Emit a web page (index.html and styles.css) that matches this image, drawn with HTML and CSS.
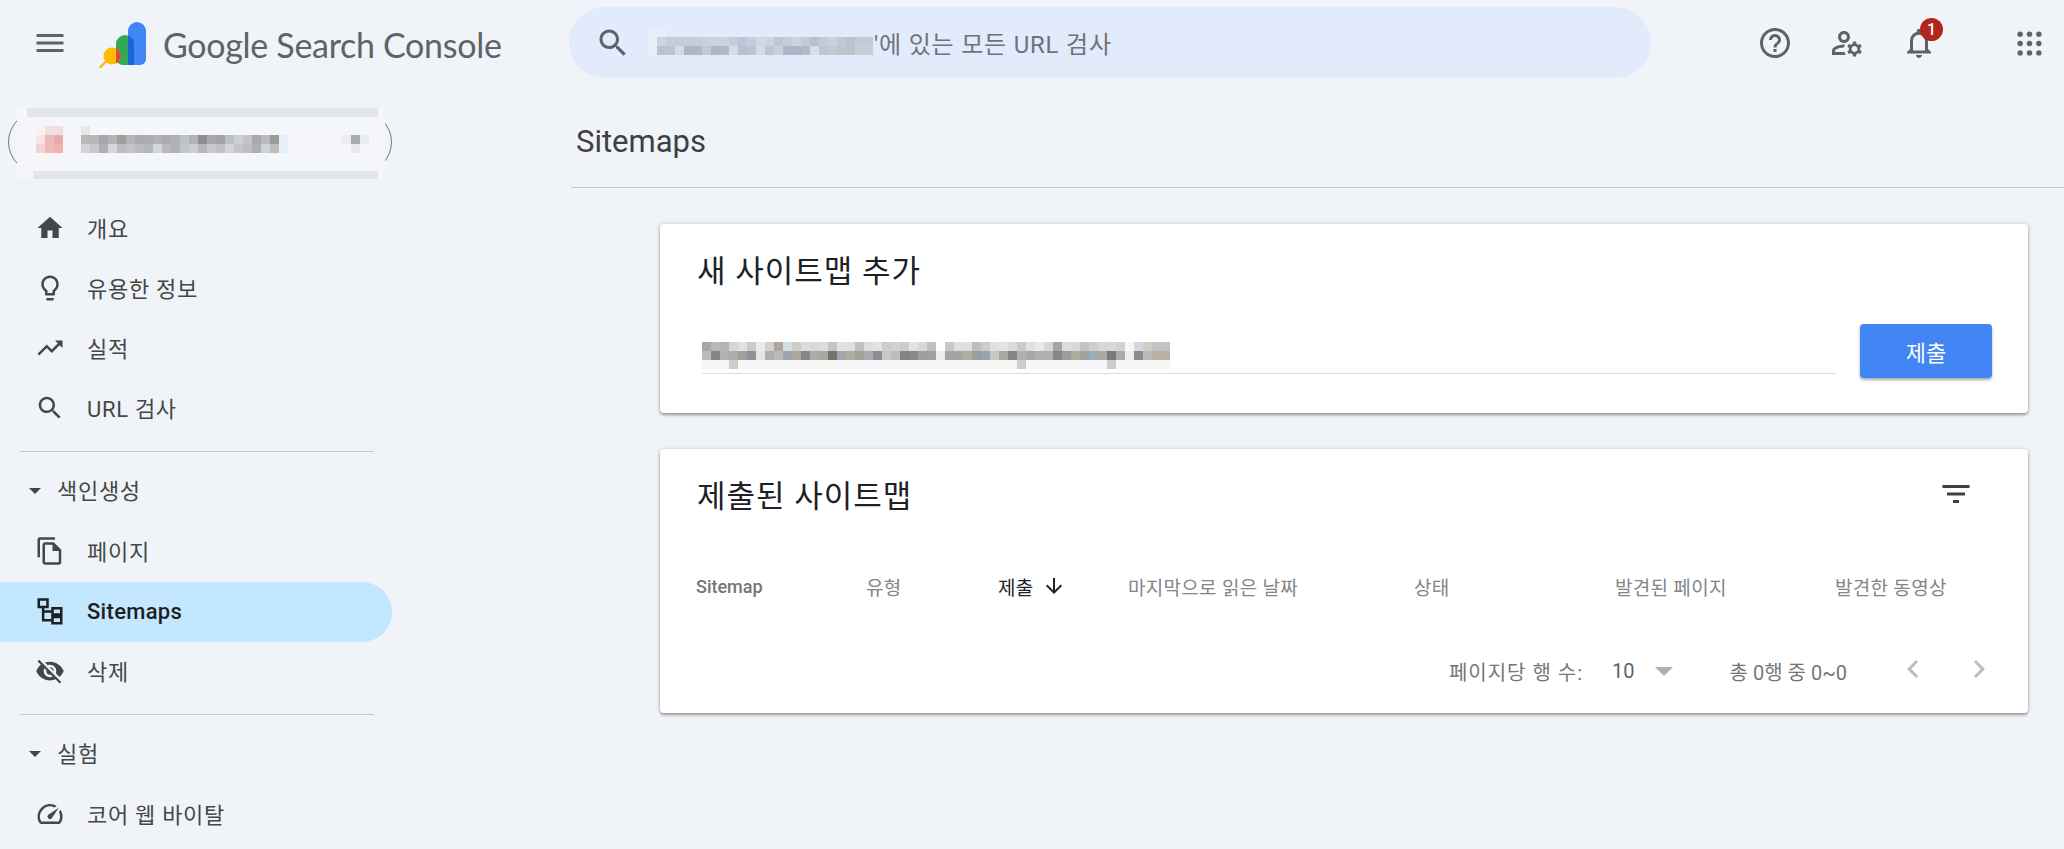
FILE: index.html
```html
<!DOCTYPE html>
<html lang="ko">
<head>
    <meta charset="UTF-8">
    <title>Sitemaps - Google Search Console</title>
    <link rel="stylesheet" href="styles.css">
</head>
<body>
    <!-- Top bar -->
    <header class="topbar">
        <svg class="icon menu-icon" viewBox="0 0 24 24"><path d="M3 18h18v-2H3v2zm0-5h18v-2H3v2zm0-7v2h18V6H3z"/></svg>
        <svg class="logo" viewBox="0 0 47 46">
            <path fill="#fbbc04" d="M.4 44.400l6.600-6.600 1.800 1.800-6.600 6.400a1.200 1.200 0 0 1-1.800-1.600z"/>
            <path fill="#34a853" d="M17 22a9 9 0 0 1 18 0v21H24a7 7 0 0 1-7-7z"/>
            <path fill="#4285f4" d="M29 9a9 9 0 0 1 18 0v28a6 6 0 0 1-6 6H29z"/>
            <path fill="#1967d2" d="M29 13.500A9 9 0 0 1 35 22v21h-6z"/>
            <circle cx="13" cy="34" r="8.500" fill="#fbbc04"/>
            <path fill="#ea4335" d="M17 26.500a8.500 8.500 0 0 1 0 15z"/>
        </svg>
        <span class="product-name">Google Search Console</span>
        <div class="searchbar">
            <svg class="icon search-icon" viewBox="0 0 24 24"><path d="M15.500 14h-.79l-.28-.27C15.410 12.590 16 11.110 16 9.500 16 5.910 13.090 3 9.500 3S3 5.910 3 9.500 5.910 16 9.500 16c1.610 0 3.090-.59 4.230-1.570l.27.28v.79l5 4.990L20.490 19l-4.990-5zm-6 0C7.010 14 5 11.990 5 9.500S7.010 5 9.500 5 14 7.010 14 9.500 11.990 14 9.500 14z"/></svg>
            <div class="mosaic search-mosaic">
                <i class="m-search-1"></i>
                <i class="m-search-2"></i>
                <i class="m-search-3"></i>
            </div>
            <span class="search-text">'에 있는 모든 URL 검사</span>
        </div>
        <div class="top-actions">
            <svg class="icon top-icon help-icon" viewBox="0 0 24 24"><path d="M11 18h2v-2h-2v2zm1-16C6.480 2 2 6.480 2 12s4.480 10 10 10 10-4.480 10-10S17.520 2 12 2zm0 18c-4.410 0-8-3.590-8-8s3.590-8 8-8 8 3.590 8 8-3.590 8-8 8zm0-14c-2.210 0-4 1.790-4 4h2c0-1.100.9-2 2-2s2 .9 2 2c0 2-3 1.750-3 5h2c0-2.250 3-2.500 3-5 0-2.210-1.790-4-4-4z"/></svg>
            <svg class="icon top-icon" viewBox="0 0 24 24"><path d="M4 18v-.65c0-.34.16-.66.41-.81C6.100 15.530 8.030 15 10 15c.03 0 .05 0 .08.01.1-.7.3-1.370.59-1.980-.22-.02-.44-.03-.67-.03-2.420 0-4.680.67-6.610 1.820-.88.52-1.390 1.500-1.390 2.530V20h9.260c-.42-.6-.75-1.280-.97-2H4zM10 12c2.210 0 4-1.790 4-4s-1.790-4-4-4-4 1.790-4 4 1.790 4 4 4zm0-6c1.100 0 2 .9 2 2s-.9 2-2 2-2-.9-2-2 .9-2 2-2zM20.750 16c0-.22-.03-.42-.06-.63l1.140-1.010-1-1.730-1.450.49c-.32-.27-.68-.48-1.080-.63L18 11h-2l-.3 1.490c-.4.15-.76.36-1.080.63l-1.450-.49-1 1.730 1.140 1.010c-.03.21-.06.41-.06.63s.03.42.06.63l-1.140 1.010 1 1.730 1.450-.49c.32.27.68.48 1.080.63L16 21h2l.3-1.490c.4-.15.76-.36 1.080-.63l1.450.49 1-1.730-1.140-1.010c.03-.21.06-.41.06-.63zM17 18c-1.100 0-2-.9-2-2s.9-2 2-2 2 .9 2 2-.9 2-2 2z"/></svg>
            <div class="bell">
                <svg class="icon top-icon" viewBox="0 0 24 24"><path d="M12 22c1.100 0 2-.9 2-2h-4c0 1.100.9 2 2 2zm6-6v-5c0-3.070-1.630-5.640-4.500-6.320V4c0-.83-.67-1.500-1.500-1.500s-1.500.67-1.500 1.500v.68C7.640 5.360 6 7.920 6 11v5l-2 2v1h16v-1l-2-2zm-2 1H8v-6c0-2.480 1.510-4.500 4-4.500s4 2.020 4 4.500v6z"/></svg>
                <span class="badge">1</span>
            </div>
            <svg class="apps-icon" viewBox="0 0 24 24">
                <circle cx="3" cy="3" r="2.600"/><circle cx="12" cy="3" r="2.600"/><circle cx="21" cy="3" r="2.600"/>
                <circle cx="3" cy="12" r="2.600"/><circle cx="12" cy="12" r="2.600"/><circle cx="21" cy="12" r="2.600"/>
                <circle cx="3" cy="21" r="2.600"/><circle cx="12" cy="21" r="2.600"/><circle cx="21" cy="21" r="2.600"/>
            </svg>
        </div>
    </header>

    <div class="layout">
        <!-- Sidebar -->
        <aside class="sidebar">
            <div class="property">
                <div class="property-blur"></div>
                <div class="mosaic favicon-mosaic">
                    <i class="m-fav-1"></i>
                    <i class="m-fav-2"></i>
                    <i class="m-fav-3"></i>
                    <i class="m-fav-4"></i>
                </div>
                <div class="mosaic property-mosaic">
                    <i class="m-prop-0"></i>
                    <i class="m-prop-1"></i>
                    <i class="m-prop-2"></i>
                </div>
                <div class="mosaic caret-mosaic">
                    <i class="m-caret-1"></i>
                    <i class="m-caret-2"></i>
                </div>
            </div>

            <nav class="nav">
                <a class="nav-item">
                    <svg class="icon" viewBox="0 0 24 24"><path d="M10 20v-6h4v6h5v-8h3L12 3 2 12h3v8z"/></svg>
                    <span>개요</span>
                </a>
                <a class="nav-item">
                    <svg class="icon" viewBox="0 0 24 24"><path d="M9 21c0 .55.45 1 1 1h4c.55 0 1-.45 1-1v-1H9v1zm3-19C8.140 2 5 5.140 5 9c0 2.380 1.190 4.470 3 5.740V17c0 .55.45 1 1 1h6c.55 0 1-.45 1-1v-2.260c1.810-1.270 3-3.360 3-5.740 0-3.860-3.140-7-7-7zm2.850 11.100l-.85.6V16h-4v-2.300l-.85-.6C7.800 12.160 7 10.630 7 9c0-2.760 2.240-5 5-5s5 2.240 5 5c0 1.630-.8 3.160-2.150 4.100z"/></svg>
                    <span>유용한 정보</span>
                </a>
                <a class="nav-item">
                    <svg class="icon" viewBox="0 0 24 24"><path d="M16 6l2.290 2.290-4.880 4.880-4-4L2 16.590 3.410 18l6-6 4 4 6.300-6.290L22 12V6z"/></svg>
                    <span>실적</span>
                </a>
                <a class="nav-item">
                    <svg class="icon" viewBox="0 0 24 24"><path d="M15.500 14h-.79l-.28-.27C15.410 12.590 16 11.110 16 9.500 16 5.910 13.090 3 9.500 3S3 5.910 3 9.500 5.910 16 9.500 16c1.610 0 3.090-.59 4.230-1.570l.27.28v.79l5 4.990L20.490 19l-4.990-5zm-6 0C7.010 14 5 11.990 5 9.500S7.010 5 9.500 5 14 7.010 14 9.500 11.990 14 9.500 14z"/></svg>
                    <span>URL 검사</span>
                </a>

                <div class="nav-divider"></div>
                <div class="nav-group"><span class="caret"></span><span>색인생성</span></div>

                <a class="nav-item">
                    <svg class="icon" viewBox="0 0 24 24"><path d="M16 1H4c-1.100 0-2 .9-2 2v14h2V3h12V1zm-1 4H8c-1.100 0-1.990.9-1.990 2L6 21c0 1.100.89 2 1.990 2H19c1.100 0 2-.9 2-2V11l-6-6zM8 21V7h6v5h5v9H8z"/></svg>
                    <span>페이지</span>
                </a>
                <a class="nav-item active">
                    <svg class="icon" viewBox="0 0 24 24"><path class="outline" d="M3 2h7v6H3zM14 9h7v5h-7zM14 16h7v5h-7zM6.500 8v10.500H14M6.500 11.500H14"/></svg>
                    <span>Sitemaps</span>
                </a>
                <a class="nav-item">
                    <svg class="icon" viewBox="0 0 24 24"><path d="M12 7c2.760 0 5 2.240 5 5 0 .65-.13 1.260-.36 1.830l2.920 2.920c1.510-1.260 2.700-2.890 3.430-4.750-1.730-4.390-6-7.500-11-7.500-1.400 0-2.740.25-3.980.7l2.160 2.160C10.740 7.130 11.350 7 12 7zM2 4.270l2.280 2.280.46.46C3.080 8.300 1.780 10.020 1 12c1.730 4.390 6 7.500 11 7.500 1.550 0 3.030-.3 4.380-.84l.42.42L19.730 22 21 20.730 3.270 3 2 4.270zM7.530 9.800l1.550 1.550c-.05.21-.08.43-.08.65 0 1.660 1.340 3 3 3 .22 0 .44-.03.65-.08l1.550 1.550c-.67.33-1.410.53-2.200.53-2.760 0-5-2.240-5-5 0-.79.2-1.530.53-2.200zm4.310-.78l3.150 3.150.02-.16c0-1.660-1.340-3-3-3l-.17.01z"/></svg>
                    <span>삭제</span>
                </a>

                <div class="nav-divider"></div>
                <div class="nav-group"><span class="caret"></span><span>실험</span></div>

                <a class="nav-item">
                    <svg class="icon" viewBox="0 0 24 24"><path d="M20.380 8.570l-1.230 1.850a8 8 0 0 1-.22 7.580H5.070A8 8 0 0 1 15.580 6.850l1.850-1.230A10 10 0 0 0 3.350 19a2 2 0 0 0 1.720 1h13.850a2 2 0 0 0 1.740-1 10 10 0 0 0-.27-10.440z"/><path d="M10.590 15.410a2 2 0 0 0 2.830 0l5.660-8.490-8.490 5.660a2 2 0 0 0 0 2.830z"/></svg>
                    <span>코어 웹 바이탈</span>
                </a>
            </nav>
        </aside>

        <!-- Content -->
        <main class="content">
            <h1 class="page-title">Sitemaps</h1>

            <div class="cards">
                <section class="card add-card">
                    <h2 class="card-title">새 사이트맵 추가</h2>
                    <div class="add-row">
                        <div class="sitemap-input">
                            <div class="mosaic input-mosaic">
                                <i class="m-input-1"></i>
                                <i class="m-input-2"></i>
                                <i class="m-input-3"></i>
                            </div>
                        </div>
                        <button class="submit-btn">제출</button>
                    </div>
                </section>

                <section class="card list-card">
                    <div class="list-head">
                        <h2 class="card-title">제출된 사이트맵</h2>
                        <svg class="icon filter-icon" viewBox="0 0 24 24"><path d="M10 18h4v-2h-4v2zM3 6v2h18V6H3zm3 7h12v-2H6v2z"/></svg>
                    </div>
                    <div class="table-head">
                        <span class="col col-sitemap">Sitemap</span>
                        <span class="col col-type">유형</span>
                        <span class="col col-submit">제출
                            <svg class="sort-icon" viewBox="0 0 24 24"><path d="M20 12l-1.410-1.410L13 16.170V4h-2v12.170l-5.580-5.590L4 12l8 8 8-8z"/></svg>
                        </span>
                        <span class="col col-read">마지막으로 읽은 날짜</span>
                        <span class="col col-status">상태</span>
                        <span class="col col-pages">발견된 페이지</span>
                        <span class="col col-videos">발견한 동영상</span>
                    </div>
                    <div class="pager">
                        <span class="pager-label">페이지당 행 수:</span>
                        <span class="pager-size">10</span>
                        <span class="pager-arrow"></span>
                        <span class="pager-count">총 0행 중 0~0</span>
                        <svg class="pager-nav" viewBox="0 0 24 24"><path d="M15.410 7.410L14 6l-6 6 6 6 1.410-1.410L10.830 12z"/></svg>
                        <svg class="pager-nav" viewBox="0 0 24 24"><path d="M10 6L8.590 7.410 13.170 12l-4.580 4.590L10 18l6-6z"/></svg>
                    </div>
                </section>
            </div>
        </main>
    </div>
</body>
</html>
```

FILE: styles.css
```css
* {
    box-sizing: border-box;
}

html, body {
    height: 100%;
}

body {
    margin: 0;
    overflow: hidden;
    background-color: #f0f4f9;
    color: #444746;
    font-family: Roboto, "Noto Sans CJK KR", sans-serif;
    font-size: 22px;
}

.icon {
    display: block;
    flex: none;
    width: 30px;
    height: 30px;
    fill: #444746;
}

/* Top bar */
.topbar {
    display: flex;
    align-items: center;
    height: 86px;
    padding-left: 32px;
}

.menu-icon {
    width: 36px;
    height: 36px;
    fill: #5f6368;
}

.logo {
    flex: none;
    width: 47px;
    height: 46px;
    margin-left: 31px;
    margin-top: 4px;
}

.product-name {
    flex: none;
    width: 406px;
    margin-left: 17px;
    margin-top: 2px;
    font-family: Lato, sans-serif;
    font-size: 34px;
    letter-spacing: -.3px;
    color: #5f6368;
}

.searchbar {
    display: flex;
    align-items: center;
    flex: none;
    width: 1082px;
    height: 71px;
    margin-top: -1px;
    padding-left: 26px;
    border-radius: 36px;
    background-color: #e1ebfc;
}

.search-icon {
    width: 36px;
    height: 36px;
    fill: #5f6368;
}

.search-mosaic {
    margin-left: 17px;
    margin-top: -3px;
}

.search-text {
    margin-left: 1px;
    color: #6f7276;
    font-size: 24px;
    letter-spacing: .8px;
    white-space: nowrap;
}

.top-actions {
    display: flex;
    align-items: center;
    margin-left: 106px;
}

.top-icon {
    width: 36px;
    height: 36px;
    fill: #5f6368;
}

.help-icon {
    margin-right: 36px;
}

.bell {
    position: relative;
    margin-left: 36px;
}

.badge {
    position: absolute;
    top: -7px;
    right: -6px;
    width: 23px;
    height: 23px;
    border-radius: 50%;
    background-color: #b3261e;
    color: #fff;
    font-size: 16px;
    font-weight: 500;
    line-height: 23px;
    text-align: center;
}

.apps-icon {
    flex: none;
    width: 25px;
    height: 25px;
    margin-left: 80px;
    fill: #5f6368;
}

/* Pixelated parts of the picture, cells are 9px */
.mosaic {
    flex: none;
}

.mosaic i {
    display: block;
    height: 9px;
}

.m-search-1 {
    width: 18px;
    background: #e9eff9;
}

.m-search-2 {
    width: 225px;
    background: linear-gradient(90deg, #e9eff9 0 9px, #cbd3e1 0 18px, #c5cddb 0 27px, #c3cbda 0 36px, #c6cedc 0 45px, #c5cddc 0 54px, #c9d1df 0 63px, #cad2e0 0 72px, #cbd3e1 0 81px, #c4cddb 0 90px, #bdc6d5 0 99px, #c5cddc 0 108px, #d0d8e5 0 117px, #cdd4e2 0 126px, #bfc7d6 0 135px, #c4ccda 0 144px, #cbd3e0 0 153px, #c2cad8 0 162px, #b9c1cf 0 171px, #c3cbd9 0 180px, #c9d1de 0 189px, #c1c9d6 0 198px, #bac2ce 0 207px, #c3cad6 0 225px);
}

.m-search-3 {
    width: 225px;
    background: linear-gradient(90deg, #e9eff9 0 9px, #bbc2cf 0 18px, #bec5d2 0 27px, #d3dbe8 0 36px, #aeb5c3 0 45px, #afb6c4 0 54px, #c1c8d6 0 63px, #aeb5c3 0 72px, #b1b8c6 0 81px, #d4dce9 0 90px, #b9c0ce 0 99px, #bcc3d1 0 108px, #d4dce9 0 117px, #bfc6d3 0 126px, #c9d0de 0 135px, #adb4c3 0 144px, #aeb5c2 0 153px, #b4bac6 0 162px, #d8dfeb 0 171px, #c0c7d3 0 180px, #c3cad5 0 189px, #bfc5cf 0 198px, #bdc2cb 0 207px, #c8ced8 0 225px);
}

/* Sidebar */
.layout {
    display: grid;
    grid-template-columns: 392px 1fr;
    height: calc(100vh - 86px);
}

.property {
    position: relative;
    width: 384px;
    height: 62px;
    margin: 25px 0 0 8px;
    border: 1px solid #747775;
    border-radius: 31px;
}

/* The blur lies over the pill and hides its straight edges */
.property-blur {
    position: absolute;
    top: -4px;
    left: 8px;
    width: 368px;
    height: 71px;
    background:
        linear-gradient(#e2e5ea, #e2e5ea) 10px 0 / 351px 9px no-repeat,
        linear-gradient(#e2e5ea, #e2e5ea) 16px 100% / 345px 8px no-repeat,
        #f4f6fa;
}

.favicon-mosaic {
    position: absolute;
    top: 14px;
    left: 27px;
}

.favicon-mosaic i {
    width: 27px;
}

.m-fav-1 {
    background: linear-gradient(90deg, #fbf1ee 0 9px, #f3dde1 0 27px);
}

.m-fav-2 {
    background: linear-gradient(90deg, #f8e4e2 0 9px, #ecb9bd 0 18px, #e8a9b1 0 27px);
}

.m-fav-3 {
    background: linear-gradient(90deg, #f0d3d9 0 9px, #efb9b5 0 18px, #f0b3b0 0 27px);
}

.m-fav-4 {
    background: #f9f6f6;
}

.property-mosaic {
    position: absolute;
    top: 14px;
    left: 72px;
}

.m-prop-0 {
    width: 9px;
    background: #e4e6ea;
}

.m-prop-1 {
    width: 207px;
    background: linear-gradient(90deg, #b9b8b8 0 18px, #a6a8aa 0 27px, #b1b5bb 0 36px, #9e9f99 0 45px, #b2b5bd 0 54px, #a9abb0 0 63px, #a9adb3 0 72px, #b4b4b4 0 81px, #acacae 0 90px, #b0b3b5 0 99px, #bcc3cb 0 108px, #b6b2b2 0 117px, #8b8d92 0 126px, #a8a9ab 0 135px, #a0a2a9 0 144px, #bcbfc6 0 153px, #ced0d2 0 162px, #c4c5c7 0 171px, #a9aaae 0 180px, #b8bbc0 0 189px, #9b9b97 0 198px, #e6eff8 0 207px);
}

.m-prop-2 {
    width: 207px;
    background: linear-gradient(90deg, #d4d4d6 0 9px, #c8c9ca 0 18px, #adafb1 0 27px, #d2d6dd 0 36px, #bcbdbb 0 45px, #c2c4c8 0 54px, #b9bcc2 0 63px, #b1b8c0 0 72px, #d4d6d9 0 81px, #b8b9bb 0 90px, #b0b2b3 0 99px, #bfc6ce 0 108px, #cfcfcf 0 117px, #b5b8c0 0 126px, #c8c9cc 0 135px, #bec1c9 0 144px, #d2d4d9 0 153px, #c4c5c7 0 162px, #bdbebf 0 171px, #adb0b3 0 180px, #cfd3d9 0 189px, #bfbdb9 0 198px, #e6eff8 0 207px);
}

.caret-mosaic {
    position: absolute;
    top: 23px;
    left: 333px;
}

.caret-mosaic i {
    width: 27px;
}

.m-caret-1 {
    background: linear-gradient(90deg, #ecedf0 0 9px, #a9abae 0 18px, #e8edf5 0 27px);
}

.m-caret-2 {
    background: linear-gradient(90deg, #f4f6fa 0 9px, #e6e8ec 0 18px, #f4f6fa 0 27px);
}

.nav {
    margin-top: 25px;
    letter-spacing: .7px;
}

.nav-item {
    display: flex;
    align-items: center;
    gap: 22px;
    height: 60px;
    padding-left: 35px;
    border-radius: 0 30px 30px 0;
    white-space: nowrap;
}

.nav-item span,
.nav-group span:last-child {
    padding-bottom: 2px;
}

.nav-item.active {
    margin-top: 1px;
    margin-bottom: -1px;
    background-color: #c2e7ff;
    color: #1f1f1f;
    font-weight: 500;
    letter-spacing: .3px;
}

.outline {
    fill: none;
    stroke: #1f1f1f;
    stroke-width: 2;
}

.nav-divider {
    width: 354px;
    height: 1px;
    margin: 13px 0 0 20px;
    background-color: #c4c7c5;
}

.nav-group {
    display: flex;
    align-items: center;
    gap: 16px;
    height: 68px;
    margin-bottom: 1px;
    padding: 7px 0 0 29px;
}

.caret {
    flex: none;
    width: 0;
    height: 0;
    margin-top: 3px;
    border-left: 6.500px solid transparent;
    border-right: 6.500px solid transparent;
    border-top: 6.500px solid #444746;
}

/* Content */
.content {
    margin-left: 179px;
}

.page-title {
    height: 102px;
    margin: 0;
    padding: 0 0 0 5px;
    border-bottom: 1px solid #c4c7c5;
    font-size: 31px;
    font-weight: 400;
    line-height: 112px;
    color: #3c4043;
}

.cards {
    display: flex;
    flex-direction: column;
    gap: 36px;
    padding: 36px 36px 0 89px;
}

.card {
    border-radius: 4px;
    background-color: #fff;
    box-shadow: 0 2px 3px rgba(60, 64, 67, .45), 0 0 4px rgba(60, 64, 67, .2);
}

.card-title {
    margin: 0;
    font-size: 31px;
    font-weight: 400;
    line-height: 42px;
    letter-spacing: 1px;
    color: #202124;
}

.add-card {
    height: 189px;
    padding: 27px 36px 0 37px;
}

.add-row {
    display: flex;
    align-items: flex-end;
    gap: 24px;
    margin-top: 31px;
}

.sitemap-input {
    flex: 1;
    height: 47px;
    margin-left: 5px;
    padding-top: 15px;
    margin-bottom: 4px;
    border-bottom: 1px solid #ddd;
}

.input-mosaic i {
    width: 468px;
}

.m-input-1 {
    background: linear-gradient(90deg, #a7a6a0 0 9px, #b6b7b9 0 18px, #b3b4b4 0 27px, #d5d5d3 0 36px, #e0e1e0 0 45px, #c9ccce 0 54px, #eaeaea 0 63px, #d2d2d2 0 72px, #aea69a 0 81px, #d3dee6 0 90px, #cfcdca 0 99px, #ddddda 0 108px, #d9d8d7 0 117px, #dcdddb 0 126px, #c2c3c3 0 135px, #e2e1df 0 144px, #e0dfdc 0 153px, #bfc1c3 0 162px, #dfdddb 0 171px, #e4e3e0 0 180px, #c9ced2 0 189px, #d2d2d2 0 198px, #cecaca 0 207px, #e2e2e2 0 216px, #d9d8d6 0 225px, #bcc1c5 0 234px, #fff 0 243px, #c8c8c6 0 252px, #dfdfde 0 261px, #e0dfdd 0 270px, #bdbebf 0 279px, #cccdce 0 288px, #e2dfdb 0 297px, #e1e5e7 0 306px, #ddd9d4 0 315px, #c8cacc 0 324px, #dfe0e3 0 333px, #ebe9e6 0 342px, #d5d7da 0 351px, #a8a3a3 0 360px, #d9dddd 0 369px, #d9d9d7 0 378px, #c0c3c5 0 387px, #cdced1 0 396px, #dad8d5 0 405px, #d9d8d5 0 414px, #cfd1d2 0 423px, #f7f6f2 0 432px, #d5d8dc 0 441px, #d0ccc8 0 450px, #c2c2c0 0 468px);
}

.m-input-2 {
    background: linear-gradient(90deg, #bcbcba 0 9px, #858784 0 18px, #b1b1b0 0 27px, #acadad 0 36px, #a59f96 0 45px, #8b949a 0 54px, #e8e6e3 0 63px, #aeadaf 0 72px, #bdb8b1 0 81px, #9aa5ad 0 90px, #a9a8a4 0 99px, #84868a 0 108px, #aeaaa5 0 117px, #a9a9a4 0 126px, #77726e 0 135px, #9ea8b0 0 144px, #b2a99f 0 153px, #a0a09f 0 162px, #a4acb3 0 171px, #8e8c8c 0 180px, #c1c9cc 0 189px, #bdbdb7 0 198px, #8a817c 0 207px, #868a8e 0 216px, #a39c96 0 225px, #a0a0aa 0 234px, #e8f0ec 0 243px, #a8a2a2 0 252px, #a0a6a8 0 261px, #b5ada2 0 270px, #9d9d9e 0 279px, #98a4ae 0 288px, #c8c8c8 0 297px, #ada89f 0 306px, #84858a 0 315px, #adb1b4 0 324px, #a8a7a7 0 333px, #b0afaa 0 342px, #abb0b4 0 351px, #8c8484 0 360px, #979e9c 0 369px, #b2a99e 0 378px, #9fa0a0 0 387px, #9dabb8 0 396px, #aea99f 0 405px, #7a7a7a 0 414px, #a9acae 0 423px, #efeeec 0 432px, #8b8c90 0 441px, #bababa 0 450px, #b8b0a3 0 468px);
}

.m-input-3 {
    background: linear-gradient(90deg, #f6f6f6 0 27px, #ccc 0 36px, #f6f6f6 0 315px, #ccc 0 324px, #f6f6f6 0 405px, #ccc 0 414px, #f6f6f6 0 468px);
}

.submit-btn {
    flex: none;
    width: 132px;
    height: 54px;
    border: none;
    border-radius: 4px;
    background-color: #4285f4;
    color: #fff;
    font: inherit;
    box-shadow: 0 2px 3px rgba(60, 64, 67, .45);
}

.list-card {
    height: 264px;
    padding: 0 30px 0 37px;
}

.list-head {
    display: flex;
    align-items: center;
    justify-content: space-between;
    height: 90px;
}

.list-head .card-title {
    margin-top: 5px;
}

.filter-icon {
    width: 36px;
    height: 36px;
    margin-top: -1px;
    margin-right: 24px;
    fill: #3c4043;
}

.table-head {
    display: grid;
    grid-template-columns: 170px 132px 130px 286px 201px 220px 1fr;
    align-items: center;
    height: 50px;
    margin-top: 22px;
    margin-left: -1px;
    font-size: 19px;
    letter-spacing: .3px;
    color: #80868b;
}

.col-sitemap {
    font-weight: 500;
    font-size: 18px;
    letter-spacing: 0;
    color: #757575;
}

.col-submit {
    display: flex;
    align-items: center;
    gap: 8px;
    color: #202124;
}

.sort-icon {
    width: 24px;
    height: 24px;
    fill: #202124;
}

.pager {
    display: flex;
    align-items: center;
    justify-content: flex-end;
    height: 48px;
    margin-top: 36px;
    padding-right: 1px;
    font-size: 20px;
    color: #757575;
}

.pager-label {
    letter-spacing: 1px;
}

.pager-size {
    margin-left: 29px;
    color: #5f6368;
}

.pager-arrow {
    width: 0;
    height: 0;
    margin-left: 20px;
    border-left: 9px solid transparent;
    border-right: 9px solid transparent;
    border-top: 9px solid #b0b0b0;
}

.pager-count {
    margin-left: 57px;
}

.pager-nav {
    width: 36px;
    height: 36px;
    fill: #bdbdbb;
    margin-left: 30px;
    margin-top: -4px;
}

.pager-count + .pager-nav {
    margin-left: 48px;
}
```
